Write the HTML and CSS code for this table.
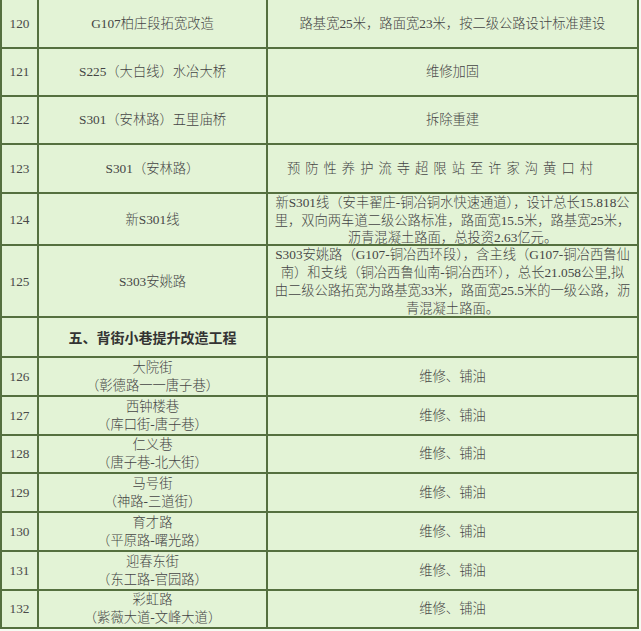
FILE: index.html
```html
<!DOCTYPE html>
<html lang="zh-CN">
<head>
<meta charset="utf-8">
<title>道路工程表</title>
<link rel="stylesheet" href="styles.css">
</head>
<body>
<div class="sheet">
  <div class="row r49">
    <div class="c num">120</div>
    <div class="c name">G107柏庄段拓宽改造</div>
    <div class="c desc">路基宽25米，路面宽23米，按二级公路设计标准建设</div>
  </div>
  <div class="row r48">
    <div class="c num">121</div>
    <div class="c name">S225（大白线）水冶大桥</div>
    <div class="c desc">维修加固</div>
  </div>
  <div class="row r48">
    <div class="c num">122</div>
    <div class="c name">S301（安林路）五里庙桥</div>
    <div class="c desc">拆除重建</div>
  </div>
  <div class="row r49">
    <div class="c num">123</div>
    <div class="c name">S301（安林路）</div>
    <div class="c desc spaced">预防性养护流寺超限站至许家沟黄口村</div>
  </div>
  <div class="row r52">
    <div class="c num">124</div>
    <div class="c name">新S301线</div>
    <div class="c desc tight">新S301线（安丰翟庄-铜冶铜水快速通道），设计总长15.818公<br>里，双向两车道二级公路标准，路面宽15.5米，路基宽25米，<br>沥青混凝土路面，总投资2.63亿元。</div>
  </div>
  <div class="row r72">
    <div class="c num">125</div>
    <div class="c name">S303安姚路</div>
    <div class="c desc">S303安姚路（G107-铜冶西环段），含主线（G107-铜冶西鲁仙<br>南）和支线（铜冶西鲁仙南-铜冶西环），总长21.058公里,拟<br>由二级公路拓宽为路基宽33米，路面宽25.5米的一级公路，沥<br>青混凝土路面。</div>
  </div>
  <div class="row r40">
    <div class="c num"></div>
    <div class="c name head">五、背街小巷提升改造工程</div>
    <div class="c desc"></div>
  </div>
  <div class="row r39">
    <div class="c num">126</div>
    <div class="c name">大院街<br>（彰德路一一唐子巷）</div>
    <div class="c desc">维修、铺油</div>
  </div>
  <div class="row r39">
    <div class="c num">127</div>
    <div class="c name">西钟楼巷<br>（库口街-唐子巷）</div>
    <div class="c desc">维修、铺油</div>
  </div>
  <div class="row r38">
    <div class="c num">128</div>
    <div class="c name">仁义巷<br>（唐子巷-北大街）</div>
    <div class="c desc">维修、铺油</div>
  </div>
  <div class="row r39">
    <div class="c num">129</div>
    <div class="c name">马号街<br>（神路-三道街）</div>
    <div class="c desc">维修、铺油</div>
  </div>
  <div class="row r39">
    <div class="c num">130</div>
    <div class="c name">育才路<br>（平原路-曙光路）</div>
    <div class="c desc">维修、铺油</div>
  </div>
  <div class="row r39">
    <div class="c num">131</div>
    <div class="c name">迎春东街<br>（东工路-官园路）</div>
    <div class="c desc">维修、铺油</div>
  </div>
  <div class="row r38">
    <div class="c num">132</div>
    <div class="c name">彩虹路<br>（紫薇大道-文峰大道）</div>
    <div class="c desc">维修、铺油</div>
  </div>
</div>
</body>
</html>
```

FILE: styles.css
```css
html, body {
  margin: 0;
  padding: 0;
  background: #f7fbf3;
}

.sheet {
  width: 639px;
  box-sizing: border-box;
  background: #e3f3d6;
  border-left: 2px solid #55703f;
  border-right: 2px solid #55703f;
  font-family: "Liberation Serif", "Noto Sans CJK SC", serif;
  font-size: 13.3px;
  font-weight: 300;
  color: #454545;
}

.row {
  display: grid;
  grid-template-columns: 37px 229px 1fr;
  box-sizing: border-box;
  border-bottom: 2px solid #55703f;
}

.r38 { height: 38px; }
.r39 { height: 39px; }
.r40 { height: 40px; }
.r48 { height: 48px; }
.r49 { height: 49px; }
.r52 { height: 52px; }
.r72 { height: 72px; }

.c {
  display: flex;
  align-items: center;
  justify-content: center;
  text-align: center;
  line-height: 18px;
  white-space: nowrap;
  overflow: visible;
}

.num,
.name {
  border-right: 2px solid #55703f;
}

.num {
  color: #4a4a4a;
}

.head {
  font-family: "Noto Sans CJK SC", sans-serif;
  font-weight: bold;
  font-size: 14px;
  color: #333;
}

.tight {
  line-height: 17.5px;
}

.spaced {
  letter-spacing: 5px;
  padding-right: 20px;
}
```
